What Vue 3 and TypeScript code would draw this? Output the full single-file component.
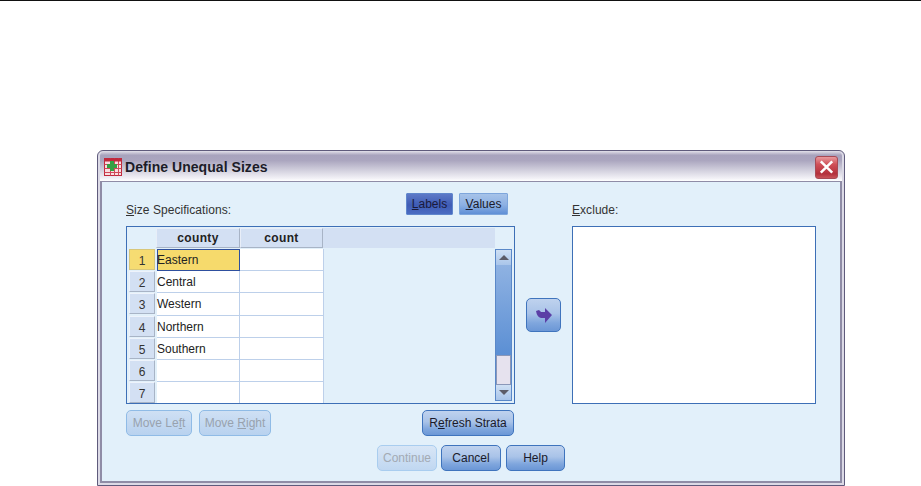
<script setup lang="ts">
const rows: string[] = ['Eastern', 'Central', 'Western', 'Northern', 'Southern', '', '']
</script>

<template>
  <div class="page">
    <div class="rule"></div>
    <div class="window">
      <div class="titlebar">
        <svg class="appicon" width="18" height="18" viewBox="0 0 18 18">
          <rect x="0.5" y="0.5" width="17" height="17" fill="#f9dde0" stroke="#c0293c" />
          <path d="M0.5 6.5H17.5M0.5 10.5H17.5M0.5 14.5H17.5M6.5 0.5V17.5M10.5 0.5V17.5M14.5 0.5V17.5" stroke="#cf4a5a" fill="none" />
          <rect x="0.5" y="0.5" width="17" height="3" fill="#c0293c" />
          <path d="M6 3H10V6H13V10H10V13H6V10H3V6H6Z" fill="#35a043" />
        </svg>
        <span class="title">Define Unequal Sizes</span>
        <span class="close">
          <svg width="22" height="22" viewBox="0 0 22 22">
            <path d="M5 5L17 17M17 5L5 17" stroke="#fff" stroke-width="2.6" fill="none" />
          </svg>
        </span>
      </div>
      <div class="body">
        <div class="main">
          <div class="left">
            <div class="lefthead">
              <span class="label"><u>S</u>ize Specifications:</span>
              <div class="toggles">
                <button class="btn toggle active"><u>L</u>abels</button>
                <button class="btn toggle"><u>V</u>alues</button>
              </div>
            </div>
            <div class="grid">
              <div class="table">
                <div class="headrow">
                  <div class="corner"></div>
                  <div class="hcell c1">county</div>
                  <div class="hcell c2">count</div>
                  <div class="hfill"></div>
                </div>
                <div v-for="(r, i) in rows" :key="i" class="row">
                  <div class="rowhead" :class="{ sel: i === 0 }">{{ i + 1 }}</div>
                  <div class="cell c1" :class="{ cur: i === 0 }">{{ r }}</div>
                  <div class="cell c2"></div>
                </div>
              </div>
              <div class="scroll">
                <div class="sbtn"><span class="up"></span></div>
                <div class="strack"></div>
                <div class="sthumb"></div>
                <div class="sbtn"><span class="down"></span></div>
              </div>
            </div>
            <div class="leftfoot">
              <button class="btn wide off ml" disabled>Move Le<u>f</u>t</button>
              <button class="btn wide off mr" disabled>Move <u>R</u>ight</button>
              <button class="btn wide refresh">R<u>e</u>fresh Strata</button>
            </div>
          </div>
          <div class="mid">
            <button class="btn arrow">
              <svg width="16" height="15" viewBox="0 0 16 15">
                <path d="M0 3L3 2L5 4H9V0L16 7L9 15V10H5Q1 9 0 3Z" fill="#5b3fa6" />
              </svg>
            </button>
          </div>
          <div class="right">
            <div class="righthead"><span class="label"><u>E</u>xclude:</span></div>
            <div class="listbox"></div>
          </div>
        </div>
        <div class="actions">
          <button class="btn act cont" disabled>Continue</button>
          <button class="btn act cancel">Cancel</button>
          <button class="btn act help">Help</button>
        </div>
      </div>
    </div>
  </div>
</template>

<style scoped>
.page {
  width: 921px;
  height: 486px;
  background: #fff;
  overflow: hidden;
  font-family: "Liberation Sans", Arial, sans-serif;
  font-size: 12px;
  color: #222;
}
.rule {
  height: 1px;
  background: #111;
}
.window {
  box-sizing: border-box;
  width: 748px;
  height: 336px;
  margin: 149px 0 0 97px;
  border: 1px solid #5f5b7c;
  border-radius: 6px 6px 0 0;
  background: #dcdae6;
  padding: 0 2px 2px 2px;
  display: flex;
  flex-direction: column;
}
.titlebar {
  box-sizing: border-box;
  height: 30px;
  flex: none;
  display: flex;
  align-items: center;
  padding: 2px 4px 0 4px;
  border-radius: 5px 5px 0 0;
  background: linear-gradient(#e3e1ea 0, #a8a3bd 14%, #aba6bf 32%, #d4d2df 66%, #f3f2f7 92%, #fff 100%);
}
.appicon {
  flex: none;
}
.title {
  margin-left: 3px;
  font-size: 14px;
  font-weight: 700;
  letter-spacing: 0.05px;
  color: #1c1c28;
}
.close {
  margin-left: auto;
  width: 23px;
  height: 23px;
  border-radius: 3px;
  border: 1px solid #a84a55;
  box-sizing: border-box;
  background: linear-gradient(#e89a9e, #d05058 35%, #b3303c 80%, #c8545a);
  display: flex;
  align-items: center;
  justify-content: center;
}
.body {
  flex: 1;
  box-sizing: border-box;
  border: 2px solid #8f8ca6;
  border-top-width: 1px;
  background: #e2f0fa;
  padding: 11px 0 0 24px;
  display: flex;
  flex-direction: column;
}
.main {
  display: flex;
}
.left {
  width: 389px;
  flex: none;
}
.lefthead {
  height: 33px;
  display: flex;
  align-items: flex-start;
  justify-content: space-between;
  padding-right: 7px;
}
.lefthead .label {
  margin-top: 10px;
}
.label {
  color: #333;
  line-height: 14px;
  letter-spacing: 0.05px;
}
.toggles {
  display: flex;
  gap: 6px;
}
.btn {
  box-sizing: border-box;
  font-family: inherit;
  font-size: 12px;
  color: #1a1a2a;
  padding: 0;
  border: 1px solid #3f74bd;
  border-radius: 5px;
  background: linear-gradient(#bfd2ee, #a9c3e8 45%, #7fa6dd 75%, #6b97d6);
  white-space: nowrap;
}
.toggle {
  height: 22px;
  border-radius: 1px;
  border-color: #7ea6dc;
  background: linear-gradient(#a7c3e9, #8cb0e3 55%, #5f8fd6);
}
.toggle:nth-child(1) {
  width: 47px;
}
.toggle:nth-child(2) {
  width: 49px;
}
.toggle.active {
  border-color: #5f86cc;
  background: linear-gradient(#5d79c7, #3f5cb5 55%, #4a6cc2);
  color: #1a1a3c;
}
.grid {
  box-sizing: border-box;
  height: 178px;
  border: 1px solid #3d6fb6;
  padding: 1px 2px 0 0;
  display: flex;
  background: #e2f0fa;
  overflow: hidden;
}
.table {
  width: 368px;
  flex: none;
  overflow: hidden;
}
.headrow {
  height: 21px;
  display: flex;
}
.corner {
  width: 29px;
  flex: none;
}
.hcell {
  box-sizing: border-box;
  height: 20px;
  background: #d3e0f3;
  border: 1px solid #a8b4c6;
  border-top-color: #e8eef8;
  border-left-color: #e8eef8;
  font-weight: 700;
  letter-spacing: 0.35px;
  text-align: center;
  line-height: 19px;
  color: #222;
}
.headrow .c1 {
  width: 84px;
}
.headrow .c2 {
  width: 83px;
}
.hfill {
  flex: 1;
  height: 20px;
  background: #d3e0f3;
}
.row {
  height: 22.2px;
  display: flex;
  flex: none;
}
.rowhead {
  box-sizing: border-box;
  width: 26px;
  height: 21px;
  margin: 0 2px;
  flex: none;
  background: #d3e0f3;
  border: 1px solid #a8b4c6;
  border-top-color: #eef3fb;
  border-left-color: #eef3fb;
  text-align: center;
  line-height: 23px;
  color: #333;
}
.rowhead.sel {
  background: #f6dc72;
  border-color: #d8c77a;
}
.cell {
  box-sizing: border-box;
  background: #fff;
  border-right: 1px solid #bdd0ea;
  border-bottom: 1px solid #bdd0ea;
  line-height: 22px;
  color: #222;
}
.row .c1 {
  width: 83px;
}
.row .c2 {
  width: 84px;
}
.cell.cur {
  background: #f6da6c;
  border: 1px solid #2e4f9e;
  line-height: 21px;
  text-indent: -1px;
}
.scroll {
  width: 17px;
  margin: 21px 0 0 auto;
  height: 152px;
  flex: none;
  display: flex;
  flex-direction: column;
  border: 1px solid #5a88c8;
  box-sizing: border-box;
}
.sbtn {
  height: 15px;
  flex: none;
  background: linear-gradient(#cfe0f4, #a9c5ea);
  display: flex;
  align-items: center;
  justify-content: center;
}
.up,
.down {
  width: 0;
  height: 0;
  border-left: 5px solid transparent;
  border-right: 5px solid transparent;
}
.up {
  border-bottom: 5px solid #5c5c68;
}
.down {
  border-top: 5px solid #5c5c68;
}
.strack {
  flex: 1;
  background: linear-gradient(#8fb2e2, #5b8fd4);
}
.sthumb {
  height: 30px;
  flex: none;
  box-sizing: border-box;
  border: 1px solid #8a97b8;
  background: #e6e2ee;
}
.leftfoot {
  margin-top: 6px;
  display: flex;
}
.wide {
  height: 26px;
}
.off {
  border-color: #8fbbe6;
  background: linear-gradient(#cfe0f4, #b8d2ef);
  color: #98a2ae;
}
.ml {
  width: 66px;
}
.mr {
  width: 72px;
  margin-left: 7px;
}
.refresh {
  width: 92px;
  margin-left: auto;
  margin-right: 1px;
}
.mid {
  width: 57px;
  flex: none;
  display: flex;
  justify-content: center;
  padding-top: 105px;
  box-sizing: border-box;
}
.arrow {
  width: 35px;
  height: 34px;
  display: flex;
  align-items: center;
  justify-content: center;
}
.right {
  width: 244px;
  flex: none;
}
.righthead {
  height: 33px;
  padding-top: 10px;
  box-sizing: border-box;
}
.listbox {
  box-sizing: border-box;
  height: 178px;
  background: #fff;
  border: 1px solid #3d6fb6;
}
.actions {
  margin-top: 9px;
  padding-left: 251px;
  display: flex;
  gap: 4px;
}
.act {
  height: 26px;
  width: 60px;
}
.cont {
  border-color: #a9cdef;
  background: linear-gradient(#d8e6f6, #c0d7f1);
  color: #a3aab3;
}
.help {
  margin-left: 1px;
  width: 59px;
}
</style>
